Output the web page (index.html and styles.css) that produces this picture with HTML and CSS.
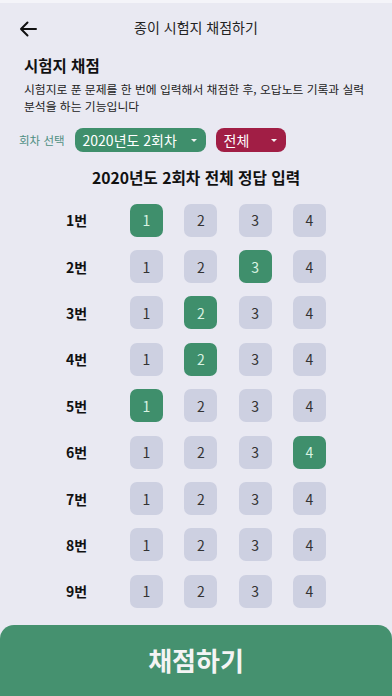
FILE: index.html
```html
<!DOCTYPE html>
<html lang="ko">
<head>
<meta charset="utf-8">
<link rel="stylesheet" href="styles.css">
</head>
<body>
<div class="status"></div>
<header class="topbar">
  <svg class="back" width="18" height="16" viewBox="0 0 18 16"><path d="M17 8H2M8.5 1.5L2 8l6.5 6.5" fill="none" stroke="#111" stroke-width="2" stroke-linecap="round" stroke-linejoin="round"/></svg>
  <div class="title">종이 시험지 채점하기</div>
</header>
<section class="intro">
  <h1>시험지 채점</h1>
  <p>시험지로 푼 문제를 한 번에 입력해서 채점한 후, 오답노트 기록과 실력 분석을 하는 기능입니다</p>
</section>
<div class="selectors">
  <span class="sel-label">회차 선택</span>
  <span class="pill green">2020년도 2회차<i class="caret"></i></span>
  <span class="pill red">전체<i class="caret"></i></span>
</div>
<h2 class="heading">2020년도 2회차 전체 정답 입력</h2>
<div class="grid">
  <div class="row"><span class="num">1번</span><span class="opt on">1</span><span class="opt">2</span><span class="opt">3</span><span class="opt">4</span></div>
  <div class="row"><span class="num">2번</span><span class="opt">1</span><span class="opt">2</span><span class="opt on">3</span><span class="opt">4</span></div>
  <div class="row"><span class="num">3번</span><span class="opt">1</span><span class="opt on">2</span><span class="opt">3</span><span class="opt">4</span></div>
  <div class="row"><span class="num">4번</span><span class="opt">1</span><span class="opt on">2</span><span class="opt">3</span><span class="opt">4</span></div>
  <div class="row"><span class="num">5번</span><span class="opt on">1</span><span class="opt">2</span><span class="opt">3</span><span class="opt">4</span></div>
  <div class="row"><span class="num">6번</span><span class="opt">1</span><span class="opt">2</span><span class="opt">3</span><span class="opt on">4</span></div>
  <div class="row"><span class="num">7번</span><span class="opt">1</span><span class="opt">2</span><span class="opt">3</span><span class="opt">4</span></div>
  <div class="row"><span class="num">8번</span><span class="opt">1</span><span class="opt">2</span><span class="opt">3</span><span class="opt">4</span></div>
  <div class="row"><span class="num">9번</span><span class="opt">1</span><span class="opt">2</span><span class="opt">3</span><span class="opt">4</span></div>
</div>
<button class="submit">채점하기</button>
</body>
</html>
```
FILE: styles.css
```css
* { box-sizing: border-box; }
html, body { margin: 0; padding: 0; }
body {
  width: 392px;
  height: 696px;
  overflow: hidden;
  background: #e9e9f2;
  font-family: "Noto Sans CJK KR", "Noto Sans", sans-serif;
  color: #111;
  position: relative;
}
.status { height: 3px; background: #f4f4f9; }
.topbar {
  height: 50px;
  display: flex;
  align-items: center;
  justify-content: center;
  position: relative;
}
.back { position: absolute; left: 19px; top: 18px; }
.title { font-size: 14px; color: #222; margin-top: -3px; }
.intro { padding: 0 20px 0 24px; }
.intro h1 {
  margin: 0;
  font-size: 15.5px;
  font-weight: 700;
  line-height: 24px;
}
.intro p {
  margin: 4px 0 0;
  font-size: 11.8px;
  line-height: 16.5px;
  color: #222;
}
.selectors {
  display: flex;
  align-items: center;
  padding-left: 19px;
  margin-top: 14px;
  height: 24px;
}
.sel-label { font-size: 11.5px; color: #4f8f82; margin-right: 10px; }
.pill {
  height: 24px;
  border-radius: 8px;
  color: #fff;
  font-size: 14px;
  white-space: nowrap;
  display: flex;
  align-items: center;
  padding: 0 9px 0 8px;
}
.pill.green { background: #3f8f6c; width: 131px; justify-content: space-between; }
.pill.red { background: #a11e45; width: 70px; margin-left: 10px; justify-content: space-between; }
.caret {
  display: inline-block;
  width: 0; height: 0;
  border-left: 3px solid transparent;
  border-right: 3px solid transparent;
  border-top: 3.5px solid #f3f3f3;
  margin-left: 8px;
}
.heading {
  margin: 14px 0 0;
  text-align: center;
  font-size: 15.7px;
  font-weight: 700;
  line-height: 24px;
}
.grid { margin-top: 7px; }
.row {
  display: flex;
  align-items: center;
  height: 46.4px;
}
.num {
  width: 130px;
  padding-left: 66px;
  font-size: 14px;
  font-weight: 700;
}
.opt {
  width: 33px;
  height: 33px;
  border-radius: 7px;
  background: #cdd0e1;
  color: #333;
  font-size: 14px;
  display: flex;
  align-items: center;
  justify-content: center;
  margin-right: 21.3px;
}
.opt.on { background: #3f8f6c; color: #d9f3e2; }
.submit {
  position: absolute;
  left: 0; right: 0; bottom: 0;
  height: 71px;
  border: 0;
  border-radius: 14px 14px 0 0;
  background: #45916f;
  color: #f4f4f4;
  font-family: inherit;
  font-size: 26px;
  font-weight: 700;
  padding-bottom: 4px;
}
```
